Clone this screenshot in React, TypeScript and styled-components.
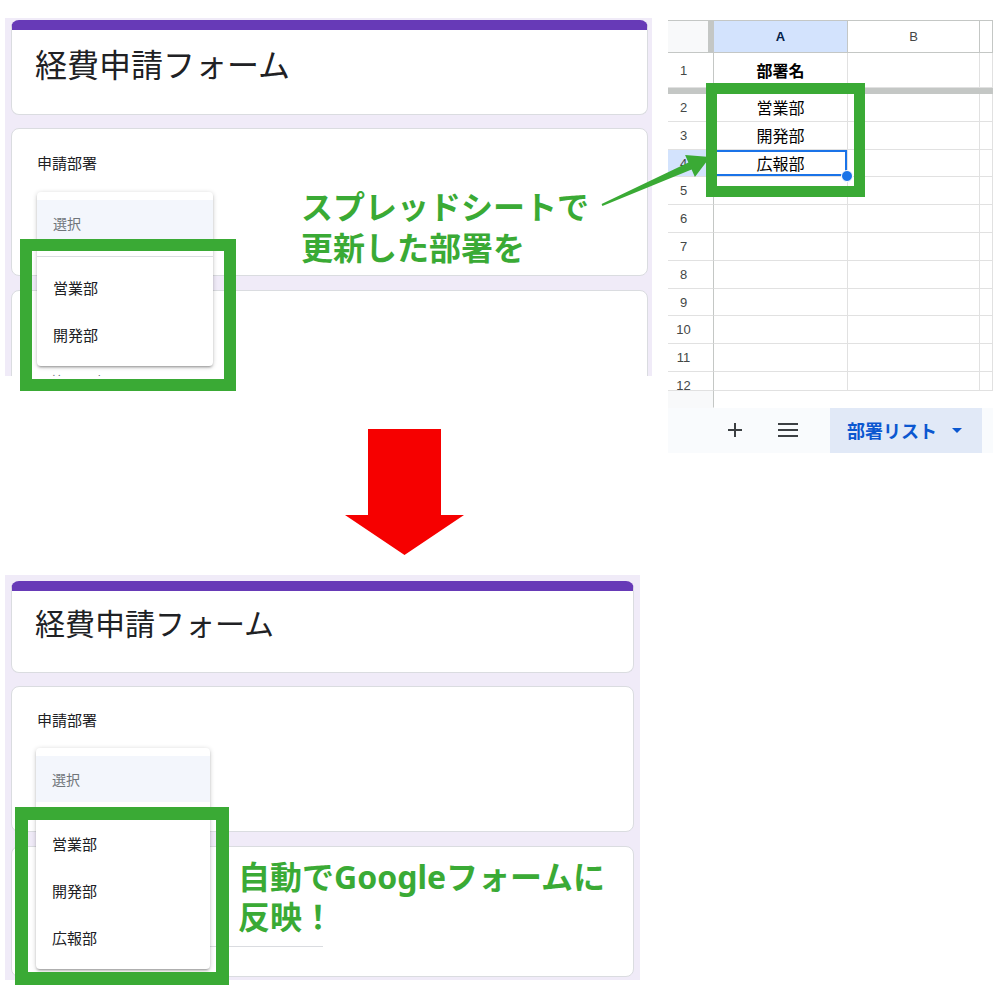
import styled, { createGlobalStyle } from "styled-components";

const GlobalStyle = createGlobalStyle`
  html, body {
    margin: 0;
    padding: 0;
    background: #fff;
  }
  body {
    font-family: "Noto Sans CJK JP", "Noto Sans", sans-serif;
  }
`;

const JP = `"Noto Sans CJK JP", "Noto Sans", sans-serif`;
const GREEN = "#3aaa35";

const Page = styled.div`
  position: relative;
  width: 993px;
  height: 1006px;
  overflow: hidden;
  display: flex;
  align-items: flex-start;
`;

const LeftColumn = styled.div`
  display: flex;
  flex-direction: column;
  align-items: flex-start;
  padding: 18px 0 0 5px;
  width: 647px;
  flex-shrink: 0;
`;

/* ---------- Google Forms screenshot ---------- */

const FormShot = styled.div<{ $w: number; $h: number; $pad: string }>`
  position: relative;
  box-sizing: border-box;
  width: ${({ $w }) => $w}px;
  height: ${({ $h }) => $h}px;
  padding: ${({ $pad }) => $pad};
  background: #f0ebf8;
  overflow: hidden;
  display: flex;
  flex-direction: column;
  font-family: ${JP};
`;

const TitleCard = styled.div<{ $h: number; $top: number; $size: number }>`
  box-sizing: border-box;
  flex-shrink: 0;
  height: ${({ $h }) => $h}px;
  background: #fff;
  border: 1px solid #dadce0;
  border-top: 10px solid #673ab7;
  border-radius: 8px;
  padding: ${({ $top }) => $top}px 0 0 23px;
  font-size: ${({ $size }) => $size}px;
  line-height: 40px;
  color: #202124;
  font-weight: 400;
`;

const QuestionCard = styled.div<{ $gap: number; $h?: number; $top: number }>`
  box-sizing: border-box;
  flex-shrink: 0;
  margin-top: ${({ $gap }) => $gap}px;
  height: ${({ $h }) => ($h ? `${$h}px` : "auto")};
  flex-grow: ${({ $h }) => ($h ? 0 : 1)};
  background: #fff;
  border: 1px solid #dadce0;
  border-radius: 8px;
  padding: ${({ $top }) => $top}px 25px 0;
`;

const QuestionLabel = styled.div`
  font-size: 15px;
  line-height: 20px;
  color: #202124;
`;

const AnswerLine = styled.div<{ $underline: boolean }>`
  width: 286px;
  height: 20px;
  font-size: 14px;
  line-height: 20px;
  color: #70757a;
  padding-bottom: 8px;
  border-bottom: 1px solid ${({ $underline }) => ($underline ? "#dadce0" : "transparent")};
`;

const Menu = styled.div<{ $left: number; $top: number; $w: number }>`
  position: absolute;
  left: ${({ $left }) => $left}px;
  top: ${({ $top }) => $top}px;
  width: ${({ $w }) => $w}px;
  background: #fff;
  border-radius: 4px;
  padding: 8px 0;
  box-shadow: 0 2px 2px 0 rgba(0, 0, 0, 0.14), 0 3px 1px -2px rgba(0, 0, 0, 0.12),
    0 1px 5px 0 rgba(0, 0, 0, 0.2);
  z-index: 2;
`;

const MenuHead = styled.div`
  height: 46px;
  display: flex;
  align-items: center;
  padding-left: 16px;
  background: #f3f6fc;
  font-size: 14px;
  color: #70757a;
`;

const MenuDivider = styled.div`
  height: 1px;
  background: #dadce0;
  margin: 10px 0 7px;
`;

const MenuItem = styled.div`
  height: 47px;
  display: flex;
  align-items: center;
  padding-left: 16px;
  font-size: 15px;
  color: #202124;
`;

type FormProps = {
  w: number;
  h: number;
  pad: string;
  titleH: number;
  titleTop: number;
  titleSize: number;
  q1H: number;
  q1Top: number;
  q2Top: number;
  placeholder: string;
  underline: boolean;
  menuLeft: number;
  menuTop: number;
  menuW: number;
  items: string[];
};

const FormScreenshot = (p: FormProps) => (
  <FormShot $w={p.w} $h={p.h} $pad={p.pad}>
    <TitleCard $h={p.titleH} $top={p.titleTop} $size={p.titleSize}>
      経費申請フォーム
    </TitleCard>
    <QuestionCard $gap={13} $h={p.q1H} $top={p.q1Top}>
      <QuestionLabel>申請部署</QuestionLabel>
    </QuestionCard>
    <QuestionCard $gap={14} $top={p.q2Top}>
      <AnswerLine $underline={p.underline}>{p.placeholder}</AnswerLine>
    </QuestionCard>
    <Menu $left={p.menuLeft} $top={p.menuTop} $w={p.menuW}>
      <MenuHead>選択</MenuHead>
      <MenuDivider />
      {p.items.map((item) => (
        <MenuItem key={item}>{item}</MenuItem>
      ))}
    </Menu>
  </FormShot>
);

const RedArrow = styled.svg`
  display: block;
  margin: 53px 0 0 340px;
  flex-shrink: 0;
`;

const BottomShotSlot = styled.div`
  margin-top: 20px;
`;

/* ---------- Google Sheets screenshot ---------- */

const Sheet = styled.div`
  box-sizing: border-box;
  flex-shrink: 0;
  margin: 20px 0 0 16px;
  width: 325px;
  height: 433px;
  display: flex;
  flex-direction: column;
  background: #fff;
  border-top: 1px solid #c4c7c5;
  font-family: "Liberation Sans", "Noto Sans CJK JP", sans-serif;
`;

const SheetRow = styled.div<{ $h: number; $lh?: number; $clip?: boolean }>`
  display: flex;
  flex-shrink: 0;
  height: ${({ $h }) => $h}px;
  line-height: ${({ $h, $lh }) => $lh ?? $h}px;
  overflow: ${({ $clip }) => ($clip ? "hidden" : "visible")};
`;

const Corner = styled.div`
  box-sizing: border-box;
  width: 40px;
  background: #f8f9fa;
  border-bottom: 1px solid #c4c7c5;
`;

const Handle = styled.div`
  width: 6px;
  background: #c4c7c5;
`;

const ColHead = styled.div<{ $w: number; $active?: boolean }>`
  box-sizing: border-box;
  width: ${({ $w }) => $w}px;
  flex-shrink: 0;
  text-align: center;
  font-size: 13px;
  background: ${({ $active }) => ($active ? "#d3e3fd" : "#fff")};
  color: ${({ $active }) => ($active ? "#041e49" : "#444746")};
  font-weight: ${({ $active }) => ($active ? 700 : 400)};
  border-right: 1px solid #c4c7c5;
  border-bottom: 1px solid #c4c7c5;
`;

const RowNum = styled.div<{ $active?: boolean; $blank?: boolean }>`
  box-sizing: border-box;
  width: 46px;
  flex-shrink: 0;
  padding-right: 14px;
  text-align: center;
  font-size: 13px;
  color: #444746;
  background: ${({ $active, $blank }) => ($active ? "#d3e3fd" : $blank ? "#f8f9fa" : "#fff")};
  border-right: 1px solid #c4c7c5;
  border-bottom: 1px solid ${({ $blank }) => ($blank ? "transparent" : "#e1e1e1")};
`;

const Cell = styled.div<{ $w: number; $bold?: boolean; $selected?: boolean }>`
  box-sizing: border-box;
  position: relative;
  width: ${({ $w }) => $w}px;
  flex-shrink: 0;
  text-align: center;
  font-family: ${JP};
  font-size: 16px;
  font-weight: ${({ $bold }) => ($bold ? 700 : 400)};
  color: #000;
  border-right: 1px solid #e1e1e1;
  border-bottom: 1px solid #e1e1e1;
  ${({ $selected }) =>
    $selected &&
    `
    z-index: 1;
    box-shadow: inset 0 0 0 2px #1a73e8;
    &::after {
      content: "";
      position: absolute;
      right: -6px;
      bottom: -6px;
      width: 10px;
      height: 10px;
      border-radius: 50%;
      background: #1a73e8;
      border: 1px solid #fff;
    }
  `}
`;

const FreezeBar = styled.div`
  height: 6px;
  flex-shrink: 0;
  background: #c4c7c5;
`;

const BlankStrip = styled.div`
  display: flex;
  height: 17px;
  flex-shrink: 0;
`;

const BottomBar = styled.div`
  display: flex;
  align-items: center;
  height: 45px;
  flex-shrink: 0;
  background: #f9fbfd;
`;

const BarIcon = styled.svg<{ $ml: number }>`
  display: block;
  margin-left: ${({ $ml }) => $ml}px;
  flex-shrink: 0;
`;

const SheetTab = styled.div`
  display: flex;
  align-items: center;
  margin-left: 32px;
  width: 152px;
  height: 100%;
  box-sizing: border-box;
  padding-left: 17px;
  background: #e1e9f7;
  color: #0b57d0;
  font-family: ${JP};
  font-size: 18px;
  font-weight: 700;
`;

const Caret = styled.svg`
  display: block;
  margin-left: 15px;
`;

const COLS = { a: 134, b: 132, c: 13 };

const rows: { n: number; value?: string }[] = [
  { n: 2, value: "営業部" },
  { n: 3, value: "開発部" },
  { n: 4, value: "広報部" },
  { n: 5 },
  { n: 6 },
  { n: 7 },
  { n: 8 },
  { n: 9 },
  { n: 10 },
  { n: 11 },
];

const Spreadsheet = () => (
  <Sheet>
    <SheetRow $h={32}>
      <Corner />
      <Handle />
      <ColHead $w={COLS.a} $active>
        A
      </ColHead>
      <ColHead $w={COLS.b}>B</ColHead>
      <ColHead $w={COLS.c} />
    </SheetRow>
    <SheetRow $h={35}>
      <RowNum>1</RowNum>
      <Cell $w={COLS.a} $bold>
        部署名
      </Cell>
      <Cell $w={COLS.b} />
      <Cell $w={COLS.c} />
    </SheetRow>
    <FreezeBar />
    {rows.map((r) => (
      <SheetRow key={r.n} $h={27.8}>
        <RowNum $active={r.n === 4}>{r.n}</RowNum>
        <Cell $w={COLS.a} $selected={r.n === 4}>
          {r.value}
        </Cell>
        <Cell $w={COLS.b} />
        <Cell $w={COLS.c} />
      </SheetRow>
    ))}
    <SheetRow $h={19} $lh={27.8} $clip>
      <RowNum>12</RowNum>
      <Cell $w={COLS.a} />
      <Cell $w={COLS.b} />
      <Cell $w={COLS.c} />
    </SheetRow>
    <BlankStrip>
      <RowNum $blank />
    </BlankStrip>
    <BottomBar>
      <BarIcon $ml={60} width="14" height="14" viewBox="0 0 14 14">
        <path d="M7 0v14M0 7h14" stroke="#3c4043" strokeWidth="2" />
      </BarIcon>
      <BarIcon $ml={36} width="20" height="14" viewBox="0 0 20 14">
        <path d="M0 1h20M0 7h20M0 13h20" stroke="#3c4043" strokeWidth="2" />
      </BarIcon>
      <SheetTab>
        部署リスト
        <Caret width="10" height="5" viewBox="0 0 10 5">
          <polygon points="0,0 10,0 5,5" fill="#0b57d0" />
        </Caret>
      </SheetTab>
    </BottomBar>
  </Sheet>
);

/* ---------- annotations laid over the screenshots ---------- */

const Highlight = styled.div<{ $l: number; $t: number; $w: number; $h: number; $b: number }>`
  position: absolute;
  left: ${({ $l }) => $l}px;
  top: ${({ $t }) => $t}px;
  width: ${({ $w }) => $w}px;
  height: ${({ $h }) => $h}px;
  box-sizing: border-box;
  border: ${({ $b }) => $b}px solid ${GREEN};
  z-index: 4;
  pointer-events: none;
`;

const Caption = styled.div<{ $l: number; $t: number; $lh: number }>`
  position: absolute;
  left: ${({ $l }) => $l}px;
  top: ${({ $t }) => $t}px;
  font-family: "Noto Sans", "Noto Sans CJK JP", sans-serif;
  font-weight: 700;
  font-size: 32px;
  line-height: ${({ $lh }) => $lh}px;
  color: ${GREEN};
  white-space: nowrap;
  z-index: 5;
`;

const GreenArrow = styled.svg`
  position: absolute;
  left: 590px;
  top: 140px;
  z-index: 3;
`;

export default function App() {
  return (
    <>
      <GlobalStyle />
      <Page>
        <LeftColumn>
          <FormScreenshot
            w={647}
            h={358}
            pad="2px 4px 0 6px"
            titleH={95}
            titleTop={13}
            titleSize={32}
            q1H={148}
            q1Top={24}
            q2Top={80}
            placeholder="回答を入力"
            underline={false}
            menuLeft={32}
            menuTop={174}
            menuW={176}
            items={["営業部", "開発部"]}
          />
          <RedArrow width="119" height="126" viewBox="0 0 119 126">
            <polygon points="23,0 96,0 96,86 119,86 59.5,126 0,86 23,86" fill="#f60000" />
          </RedArrow>
          <BottomShotSlot>
            <FormScreenshot
              w={635}
              h={405}
              pad="6px 6px 3px 6px"
              titleH={92}
              titleTop={11}
              titleSize={30}
              q1H={146}
              q1Top={23}
              q2Top={71}
              placeholder=""
              underline
              menuLeft={31}
              menuTop={173}
              menuW={174}
              items={["営業部", "開発部", "広報部"]}
            />
          </BottomShotSlot>
        </LeftColumn>
        <Spreadsheet />

        <Highlight $l={20} $t={239} $w={216} $h={152} $b={12} />
        <Highlight $l={706} $t={83} $w={159} $h={114} $b={11} />
        <Highlight $l={15} $t={807} $w={214} $h={178} $b={13} />

        <GreenArrow width="130" height="80" viewBox="590 140 130 80">
          <polygon
            points="601.6,204.1 688.4,162.4 685.1,155.1 710.1,157 694.9,176.9 691.6,169.6 602.4,205.9"
            fill={GREEN}
          />
        </GreenArrow>

        <Caption $l={301} $t={186} $lh={41}>
          スプレッドシートで
          <br />
          更新した部署を
        </Caption>
        <Caption $l={238} $t={857} $lh={40}>
          自動でGoogleフォームに
          <br />
          反映！
        </Caption>
      </Page>
    </>
  );
}
